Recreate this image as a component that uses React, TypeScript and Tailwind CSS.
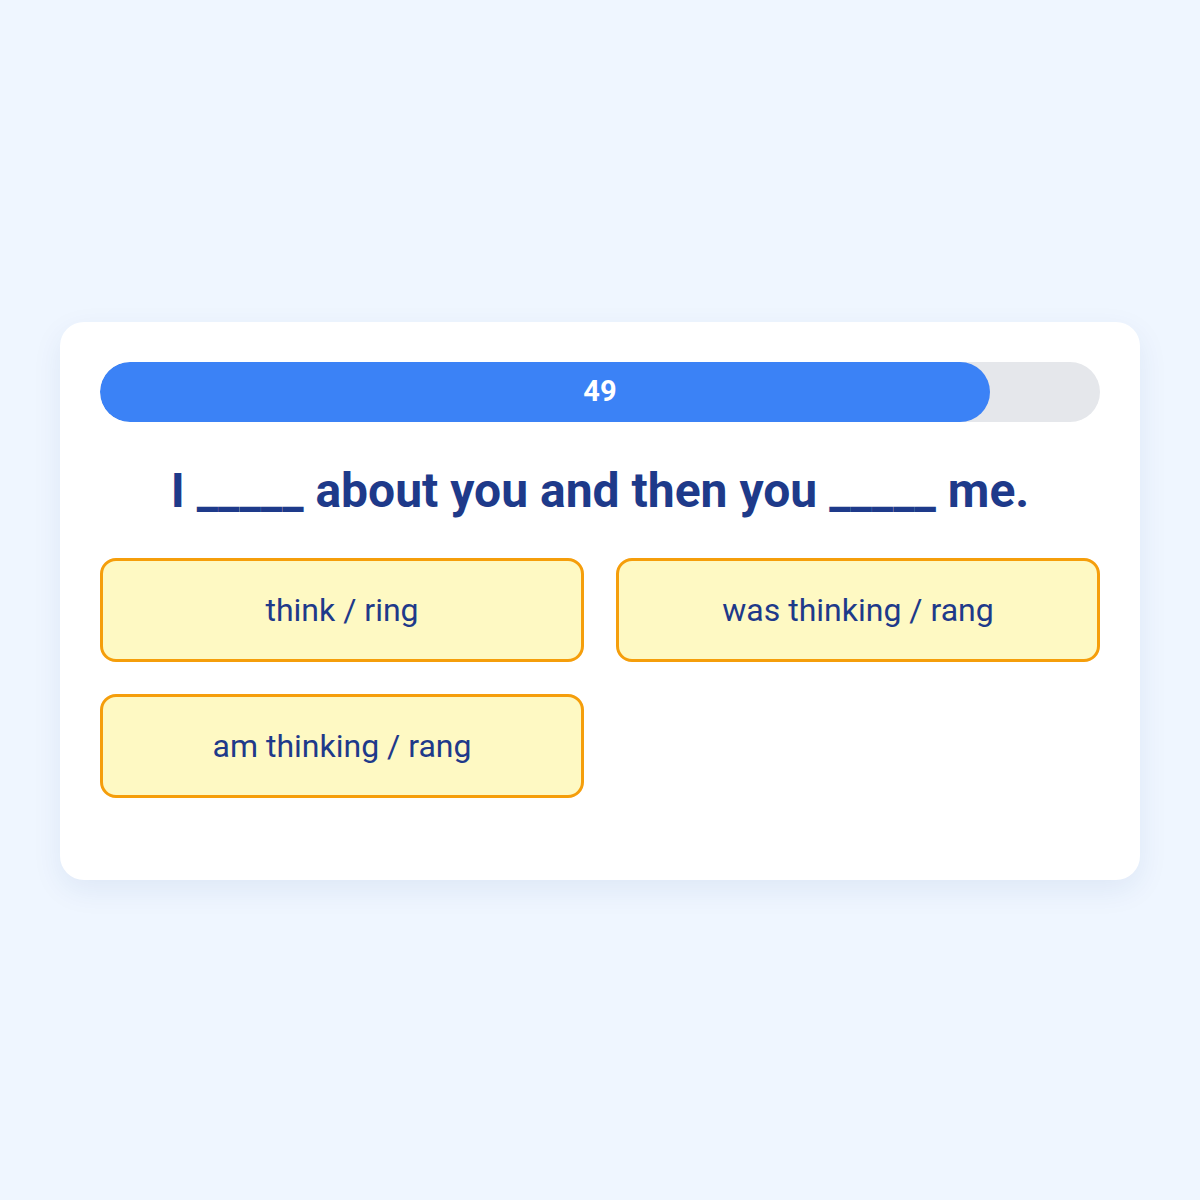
import React from 'react'

const options = ['think / ring', 'was thinking / rang', 'am thinking / rang']

function App() {
  return (
    <div className="min-h-[1200px] w-full bg-[#eff6ff] flex items-center justify-center pt-[2px] font-['Roboto',sans-serif]">
      <div className="w-[1080px] bg-white rounded-3xl p-10 pb-[82px] shadow-[0_10px_30px_rgba(30,58,138,0.08)]">
        <div className="relative h-[60px] w-full rounded-full bg-[#e5e7eb] overflow-hidden">
          <div className="h-full w-[89%] rounded-full bg-[#3b82f6]" />
          <div className="absolute inset-0 flex items-center justify-center text-[29px] font-bold text-white">
            49
          </div>
        </div>

        <h1 className="mt-10 mb-[38px] text-center text-5xl leading-[1.2] font-bold text-[#1e3a8a]">
          I _____ about you and then you _____ me.
        </h1>

        <div className="grid grid-cols-2 gap-8">
          {options.map((opt) => (
            <button
              key={opt}
              className="h-[104px] rounded-2xl border-[3px] border-[#f59e0b] bg-[#fef9c3] text-[32px] text-[#1e3a8a]"
            >
              {opt}
            </button>
          ))}
        </div>
      </div>
    </div>
  )
}

export default App
